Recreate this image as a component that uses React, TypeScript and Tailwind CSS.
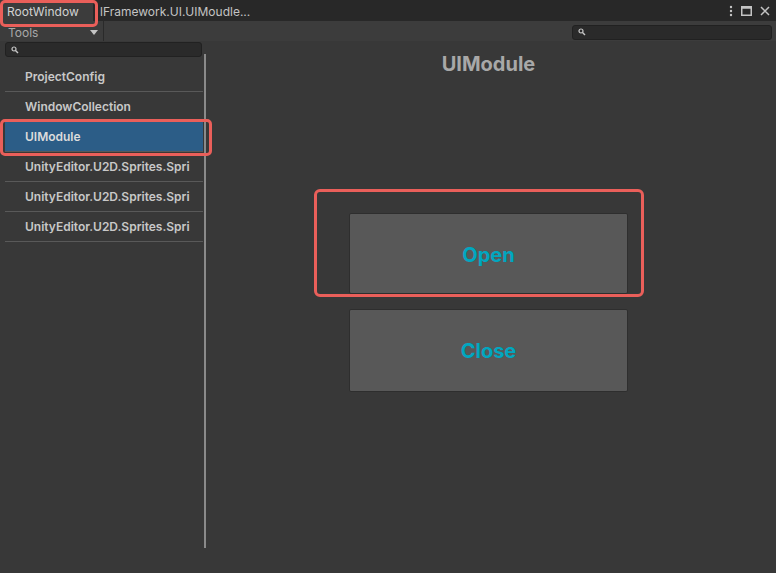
import React from 'react';

const items = [
  'ProjectConfig',
  'WindowCollection',
  'UIModule',
  'UnityEditor.U2D.Sprites.Spri',
  'UnityEditor.U2D.Sprites.Spri',
  'UnityEditor.U2D.Sprites.Spri',
];

function SearchIcon() {
  return (
    <svg width="8" height="8" viewBox="0 0 8 8" className="shrink-0">
      <circle cx="3" cy="3" r="2" fill="none" stroke="#c8c8c8" strokeWidth="1.2" />
      <path d="M4.5 4.5 L7 7" stroke="#c8c8c8" strokeWidth="1.4" />
    </svg>
  );
}

export default function App() {
  const selected = 2;

  return (
    <div className="relative w-[776px] h-[573px] overflow-hidden bg-[#383838] font-['Inter',sans-serif] select-none">
      {/* title bar with tabs */}
      <div className="flex h-[21px] bg-[#282828] items-stretch">
        <div className="w-[93px] bg-[#3c3c3c] text-[12px] text-[#d2d2d2] pl-[7px] pt-[3px] flex items-center">
          RootWindow
        </div>
        <div className="pl-[7px] pt-[3px] text-[12px] text-[#c4c4c4] flex items-center">
          lFramework.UI.UIMoudle...
        </div>
        <div className="ml-auto flex items-center gap-[8px] pr-[6px]">
          <svg width="4" height="12" viewBox="0 0 4 12">
            <circle cx="2" cy="2" r="1.2" fill="#c4c4c4" />
            <circle cx="2" cy="6" r="1.2" fill="#c4c4c4" />
            <circle cx="2" cy="10" r="1.2" fill="#c4c4c4" />
          </svg>
          <svg width="11" height="10" viewBox="0 0 11 10">
            <rect x="0.75" y="0.75" width="9.5" height="8.5" fill="none" stroke="#c4c4c4" strokeWidth="1.5" />
            <rect x="0.75" y="0.75" width="9.5" height="2" fill="#c4c4c4" />
          </svg>
          <svg width="10" height="10" viewBox="0 0 10 10">
            <path d="M1 1 L9 9 M9 1 L1 9" stroke="#c4c4c4" strokeWidth="1.5" />
          </svg>
        </div>
      </div>

      {/* toolbar */}
      <div className="flex h-[20px] bg-[#3c3c3c] items-center">
        <div className="ml-[4px] w-[100px] h-[20px] border-r border-[#2a2a2a] flex items-center pl-[4px] pr-[5px] pt-[4px] text-[12px] text-[#a8a8a8]">
          <span>Tools</span>
          <svg width="8" height="5" viewBox="0 0 8 5" className="ml-auto mb-[2px]">
            <path d="M0 0 L8 0 L4 5 Z" fill="#c4c4c4" />
          </svg>
        </div>
        <div className="ml-auto mr-[4px] mt-[2px] w-[200px] h-[15px] rounded-[3px] bg-[#2a2a2a] border border-[#212121] flex items-center pl-[5px]">
          <SearchIcon />
        </div>
      </div>

      {/* body */}
      <div className="flex">
        <div className="w-[204px] flex flex-col">
          <div className="ml-[5px] mt-[1px] w-[197px] h-[15px] rounded-[3px] bg-[#2a2a2a] border border-[#212121] flex items-center pl-[5px]">
            <SearchIcon />
          </div>
          <div className="mt-[5px] flex flex-col">
            {items.map((name, i) => (
              <div
                key={i}
                className={`ml-[5px] w-[198px] h-[30px] flex items-center pl-[20px] pr-[6px] border-b border-[#595959] text-[12px] font-semibold whitespace-nowrap ${
                  i === selected ? 'bg-[#2c5d87] text-[#dcdcdc]' : 'text-[#c8c8c8]'
                }`}
              >
                <span className="block overflow-hidden leading-[18px]">{name}</span>
              </div>
            ))}
          </div>
        </div>

        <div className="mt-[13px] w-[2px] h-[494px] bg-[#8a8a8a]" />

        <div className="flex-1 flex flex-col items-center pr-[5px]">
          <div className="mt-[13px] text-[20px] font-bold text-[#a8a8a8] leading-none">UIModule</div>
          <div className="mt-[139px] flex flex-col gap-[15px]">
            <button className="w-[279px] h-[81px] pt-[3px] rounded-[2px] bg-[#585858] border border-[#2e2e2e] text-[20px] font-bold text-[#00a7c0]">
              Open
            </button>
            <button className="w-[279px] h-[83px] pt-[1px] rounded-[2px] bg-[#585858] border border-[#2e2e2e] text-[20px] font-bold text-[#00a7c0]">
              Close
            </button>
          </div>
        </div>
      </div>

      {/* annotation highlights */}
      <div className="absolute left-[0px] top-[0px] w-[98px] h-[27px] border-[3px] border-[#ea5f5a] rounded-[5px]" />
      <div className="absolute left-[0px] top-[119px] w-[212px] h-[37px] border-[3px] border-[#ea5f5a] rounded-[5px]" />
      <div className="absolute left-[314px] top-[189px] w-[330px] h-[108px] border-[3px] border-[#ea5f5a] rounded-[6px]" />
    </div>
  );
}
